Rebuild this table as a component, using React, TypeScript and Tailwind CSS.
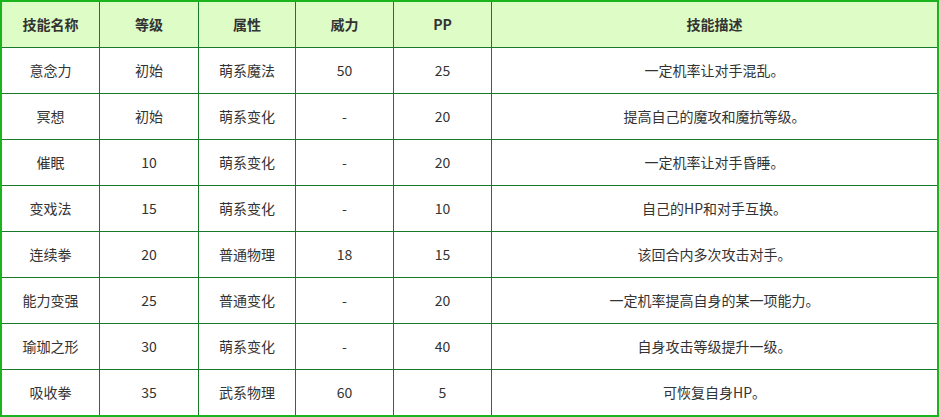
const headers = ["技能名称", "等级", "属性", "威力", "PP", "技能描述"];

const rows: string[][] = [
  ["意念力", "初始", "萌系魔法", "50", "25", "一定机率让对手混乱。"],
  ["冥想", "初始", "萌系变化", "-", "20", "提高自己的魔攻和魔抗等级。"],
  ["催眠", "10", "萌系变化", "-", "20", "一定机率让对手昏睡。"],
  ["变戏法", "15", "萌系变化", "-", "10", "自己的HP和对手互换。"],
  ["连续拳", "20", "普通物理", "18", "15", "该回合内多次攻击对手。"],
  ["能力变强", "25", "普通变化", "-", "20", "一定机率提高自身的某一项能力。"],
  ["瑜珈之形", "30", "萌系变化", "-", "40", "自身攻击等级提升一级。"],
  ["吸收拳", "35", "武系物理", "60", "5", "可恢复自身HP。"],
];

export default function App() {
  return (
    <div
      className="w-[939px] h-[417px] bg-white"
      style={{ fontFamily: '"Microsoft YaHei", "Noto Sans CJK SC", sans-serif' }}
    >
      <div className="grid grid-cols-[98px_99px_97px_98px_98px_445px] border-2 border-[#1cb41c] text-[14px] text-[#333]">
        {headers.map((h, i) => (
          <div
            key={h}
            className={`flex h-[46px] items-center justify-center border-b border-[#17792b] bg-[#ddfcc6] font-bold ${
              i < 5 ? "border-r" : ""
            }`}
          >
            {h}
          </div>
        ))}
        {rows.map((row, r) =>
          row.map((cell, c) => (
            <div
              key={`${r}-${c}`}
              className={`flex items-center justify-center border-[#17792b] ${
                r < rows.length - 1 ? "h-[46px] border-b" : "h-[45px]"
              } ${c < 5 ? "border-r" : ""}`}
            >
              {cell}
            </div>
          ))
        )}
      </div>
    </div>
  );
}
